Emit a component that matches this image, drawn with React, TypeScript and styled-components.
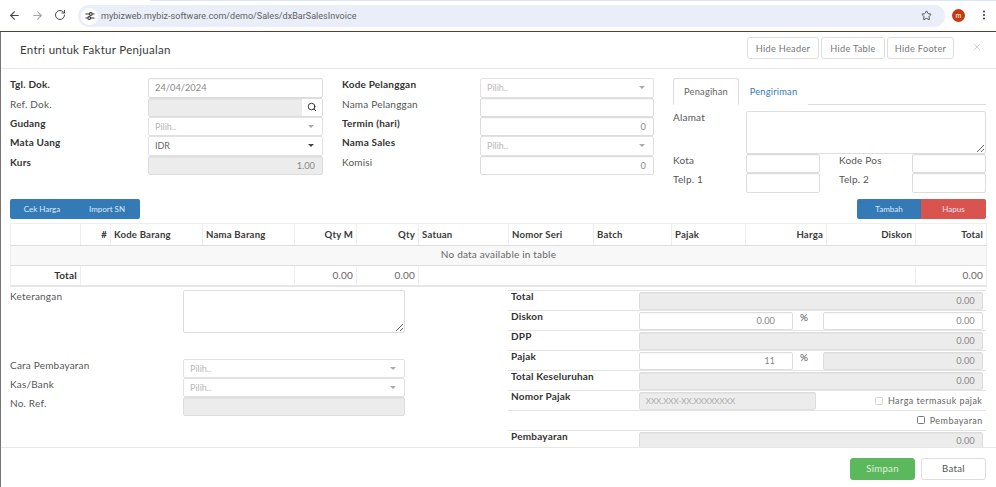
import React from "react";
import styled, { createGlobalStyle } from "styled-components";
import { ArrowLeft, ArrowRight, RotateCw, Star, Search, X, EllipsisVertical } from "lucide-react";

const Global = createGlobalStyle`
  html, body { margin: 0; padding: 0; width: 996px; height: 487px; overflow: hidden; background: #fff; }
  * { box-sizing: border-box; }
  body { font-family: "Lato", "Noto Sans", "Liberation Sans", sans-serif; font-size: 10px; color: #333; }
  input::placeholder { color: #aaa; opacity: 1; font-size: 8px; letter-spacing: 0; }
`;

const Page = styled.div`
  position: relative;
  width: 996px;
  height: 487px;
  overflow: hidden;
  background: #757575;
`;

const BrowserBar = styled.div`
  position: relative;
  height: 31px;
  background: #fff;
  display: flex;
  align-items: center;
  color: #474747;
`;
const TabEdge = styled.div`
  position: absolute;
  left: 150px;
  right: 0;
  top: 0;
  height: 1px;
  background: #d9e6fb;
`;
const NavIcon = styled.span<{ $x: number; $muted?: boolean }>`
  position: absolute;
  left: ${(p) => p.$x}px;
  top: 9px;
  width: 13px;
  height: 13px;
  display: flex;
  color: ${(p) => (p.$muted ? "#a8a8a8" : "#474747")};
`;
const UrlPill = styled.div`
  position: absolute;
  left: 78px;
  top: 5px;
  width: 867px;
  height: 22px;
  border-radius: 11px;
  background: #e9eef9;
  display: flex;
  align-items: center;
`;
const SiteBadge = styled.span`
  width: 17px;
  height: 17px;
  margin-left: 3px;
  border-radius: 50%;
  background: #fff;
  display: flex;
  align-items: center;
  justify-content: center;
`;
const UrlText = styled.span`
  margin-left: 3px;
  font-family: "Roboto", "Liberation Sans", sans-serif;
  font-size: 9px;
  color: #5e5e5e;
  letter-spacing: 0.03px;
`;
const UrlStar = styled.span`
  position: absolute;
  right: 13px;
  top: 5px;
  display: flex;
  color: #474747;
`;
const Avatar = styled.span`
  position: absolute;
  left: 952px;
  top: 9px;
  width: 13px;
  height: 13px;
  border-radius: 50%;
  background: #c4390f;
  color: #fff;
  font-size: 7px;
  line-height: 12px;
  text-align: center;
`;

const Modal = styled.div`
  position: absolute;
  left: 1px;
  top: 32px;
  width: 995px;
  height: 455px;
  background: #fff;
  display: flex;
  flex-direction: column;
`;
const BackdropLine = styled.div`
  position: absolute;
  left: 0;
  top: 31px;
  width: 996px;
  height: 1px;
  background: #5a4030;
`;
const ModalHeader = styled.header`
  position: relative;
  flex: none;
  height: 37px;
  border-bottom: 1px solid #e8e8e8;
`;
const Title = styled.h4`
  position: absolute;
  left: 19px;
  top: 9.5px;
  margin: 0;
  font-size: 11.5px;
  line-height: 16px;
  font-weight: 400;
  letter-spacing: 0.3px;
  color: #3a3a3a;
`;
const HeaderTools = styled.div`
  position: absolute;
  left: 746px;
  top: 5px;
  display: flex;
  gap: 2px;
`;
const GhostButton = styled.button<{ $w: number }>`
  width: ${(p) => p.$w}px;
  height: 22px;
  padding: 0;
  background: #fff;
  border: 1px solid #ddd;
  border-radius: 3px;
  font: inherit;
  font-size: 9.2px;
  letter-spacing: 0.3px;
  color: #777;
`;
const CloseMark = styled.span`
  position: absolute;
  left: 971px;
  top: 10px;
  display: flex;
  color: #c8c8c8;
`;

const ModalBody = styled.main`
  flex: 1;
  min-height: 0;
  overflow: hidden;
`;
const TopForm = styled.section`
  height: 130px;
  padding-top: 9.3px;
  position: relative;
`;
const FieldColumn = styled.div<{ $x: number; $w: number }>`
  position: absolute;
  left: ${(p) => p.$x - 1}px;
  top: 9.3px;
  width: ${(p) => p.$w}px;
`;
const FieldRow = styled.div<{ $label: number }>`
  display: grid;
  grid-template-columns: ${(p) => p.$label}px 1fr;
  height: 19.33px;
`;
const Label = styled.label<{ $bold?: boolean }>`
  font-size: 10px;
  line-height: 12px;
  font-weight: ${(p) => (p.$bold ? 700 : 400)};
  color: ${(p) => (p.$bold ? "#333" : "#555")};
  letter-spacing: 0.2px;
  white-space: nowrap;
`;
const TotalLabel = styled(Label)`
  margin-top: -2px;
  padding-left: 3px;
`;
const TextInput = styled.input<{ $right?: boolean; $inset?: boolean }>`
  width: 100%;
  height: 100%;
  min-width: 0;
  margin: 0;
  padding: 0 ${(p) => (p.$inset ? 17 : 7)}px 0 6px;
  font: inherit;
  font-size: 9.3px;
  color: #888;
  text-align: ${(p) => (p.$right ? "right" : "left")};
  background: ${(p) => (p.disabled ? "#ececec" : "#fff")};
  border: 1px solid #ddd;
  border-radius: 2px;
  box-shadow: inset 0 1px 0 rgba(0, 0, 0, 0.03);
  outline: none;
  &:disabled { color: #888; -webkit-text-fill-color: currentColor; opacity: 1; }
`;
const SearchGroup = styled.div`
  position: relative;
  height: 100%;
`;
const SearchAddon = styled.span`
  position: absolute;
  right: 1px;
  top: 1px;
  bottom: 1px;
  width: 20px;
  background: #fff;
  display: flex;
  align-items: center;
  justify-content: center;
  color: #333;
`;
const SelectBox = styled.div<{ $filled?: boolean }>`
  height: 100%;
  padding: 0 7px 0 6px;
  display: flex;
  align-items: center;
  justify-content: space-between;
  border: 1px solid #e2e2e2;
  border-radius: 2px;
  background: #fff;
  font-size: 9px;
  color: ${(p) => (p.$filled ? "#666" : "#b8b8b8")};
`;
const Caret = styled.span<{ $dark?: boolean }>`
  width: 0;
  height: 0;
  border-left: 3px solid transparent;
  border-right: 3px solid transparent;
  border-top: 3px solid ${(p) => (p.$dark ? "#444" : "#aaa")};
  margin-right: 1px;
`;
const TabStrip = styled.div`
  height: 26.7px;
  display: flex;
  border-bottom: 1px solid #ddd;
`;
const Tab = styled.div<{ $active?: boolean }>`
  width: ${(p) => (p.$active ? 66 : 69)}px;
  height: 27px;
  padding-top: 7px;
  text-align: center;
  line-height: 12px;
  font-size: 9.3px;
  letter-spacing: 0.2px;
  color: ${(p) => (p.$active ? "#666" : "#337ab7")};
  background: #fff;
  border: 1px solid ${(p) => (p.$active ? "#ddd" : "transparent")};
  border-bottom-color: ${(p) => (p.$active ? "#fff" : "transparent")};
  border-radius: 3px 3px 0 0;
`;
const AddressArea = styled.div`
  display: grid;
  grid-template-columns: 73px 1fr;
  height: 43px;
  margin-top: 6px;
`;
const TallInput = styled.textarea`
  display: block;
  width: 100%;
  height: 100%;
  margin: 0;
  padding: 4px 7px;
  font: inherit;
  resize: vertical;
  border: 1px solid #ddd;
  border-radius: 2px;
  outline: none;
  background: #fff;
`;
const PairRow = styled.div`
  display: grid;
  grid-template-columns: 73px 74px 19px 73px 74px;
  height: 19.33px;
`;

const ActionBar = styled.div`
  display: flex;
  justify-content: space-between;
  margin: 0 10px 0 9px;
  height: 20px;
`;
const ButtonGroup = styled.div`
  display: flex;
  height: 20px;
  border-radius: 2px;
  overflow: hidden;
`;
const ActionButton = styled.button<{ $w: number; $danger?: boolean }>`
  width: ${(p) => p.$w}px;
  height: 20px;
  padding: 0;
  border: 0;
  font: inherit;
  font-size: 8px;
  color: #dfeaf5;
  background: ${(p) => (p.$danger ? "#d9534f" : "#337ab7")};
`;

const GridTable = styled.table`
  width: 976px;
  margin: 4px 0 0 9px;
  border-collapse: collapse;
  table-layout: fixed;
  font-size: 10px;
  border: 1px solid #eee;
`;
const HeadCell = styled.th<{ $right?: boolean }>`
  height: 22px;
  padding: 0 3px;
  font-size: 9.6px;
  font-weight: 700;
  text-align: ${(p) => (p.$right ? "right" : "left")};
  color: #3a3a3a;
  letter-spacing: 0.2px;
  border-right: 1px solid #eee;
  border-bottom: 1px solid #ddd;
  white-space: nowrap;
`;
const EmptyCell = styled.td`
  height: 20px;
  padding: 0 0 3px;
  text-align: center;
  background: #f8f8f8;
  color: #666;
  letter-spacing: 0.2px;
  border-bottom: 1px solid #ddd;
`;
const FootCell = styled.td<{ $strong?: boolean }>`
  height: 20px;
  padding: 0 3px;
  text-align: right;
  font-weight: ${(p) => (p.$strong ? 700 : 400)};
  color: ${(p) => (p.$strong ? "#333" : "#666")};
  letter-spacing: 0.2px;
  border-right: 1px solid #eee;
  border-bottom: 2px solid #e6e6e6;
`;
const WidthCol = styled.col<{ $w: number }>`
  width: ${(p) => p.$w}px;
`;

const BottomForm = styled.section`
  position: relative;
  height: 170px;
`;
const NotesColumn = styled.div`
  position: absolute;
  left: 9px;
  top: 3px;
  width: 395px;
`;
const NotesRow = styled.div`
  display: grid;
  grid-template-columns: 173px 222px;
  height: 43px;
  margin-bottom: 26px;
`;
const TotalsColumn = styled.div`
  position: absolute;
  left: 507px;
  top: 3px;
  width: 478px;
`;
const TotalRow = styled.div<{ $cols?: string }>`
  display: grid;
  grid-template-columns: ${(p) => p.$cols ?? "130.7px 344px"};
  height: 20px;
  padding-top: 1.5px;
  border-top: 1px solid #e4e4e4;
`;
const PercentCell = styled.div`
  padding: 0 0 0 7px;
  font-size: 10px;
  line-height: 11px;
  color: #555;
  background: #fff;
`;
const CheckWrap = styled.div`
  display: flex;
  align-items: center;
  justify-content: flex-end;
  gap: 5px;
  height: 100%;
  padding-right: 3.3px;
  font-size: 9px;
  letter-spacing: 0.45px;
  color: #666;
`;
const CheckMark = styled.span<{ $soft?: boolean }>`
  width: 8px;
  height: 8px;
  border: 1px solid ${(p) => (p.$soft ? "#d4d4d4" : "#777")};
  border-radius: 1.5px;
  background: #fff;
`;
const WideCheckRow = styled.div`
  height: 20px;
  border-top: 1px solid #e4e4e4;
`;

const ModalFooter = styled.footer`
  flex: none;
  height: 40px;
  border-top: 1px solid #e8e8e8;
  display: flex;
  justify-content: flex-end;
  align-items: flex-start;
  gap: 6px;
  padding: 9.5px 10px 0 0;
`;
const FooterButton = styled.button<{ $primary?: boolean }>`
  width: 65px;
  height: 22px;
  padding: 0;
  font: inherit;
  font-size: 9.6px;
  letter-spacing: 0.3px;
  border-radius: 3px;
  color: ${(p) => (p.$primary ? "#dff0df" : "#555")};
  background: ${(p) => (p.$primary ? "#5cb85c" : "#fff")};
  border: 1px solid ${(p) => (p.$primary ? "#5cb85c" : "#ddd")};
`;

const Select = ({ value }: { value?: string }) => (
  <SelectBox $filled={!!value}>
    {value ?? "Pilih.."}
    <Caret $dark={!!value} />
  </SelectBox>
);

const cols = [70, 30, 92, 92, 62, 62, 90, 85, 78, 74, 81, 89, 71];

export default function App() {
  return (
    <Page>
      <Global />
      <BrowserBar>
        <TabEdge />
        <NavIcon $x={8}><ArrowLeft size={13} strokeWidth={2} /></NavIcon>
        <NavIcon $x={31} $muted><ArrowRight size={13} strokeWidth={2} /></NavIcon>
        <NavIcon $x={54}><RotateCw size={12} strokeWidth={2} /></NavIcon>
        <UrlPill>
          <SiteBadge>
            <svg width="10" height="10" viewBox="0 0 10 10" fill="none" stroke="#333" strokeWidth="1.1">
              <path d="M0.5 3H4M7.5 3H9.5M0.5 7H2.5M6 7H9.5" />
              <circle cx="5.8" cy="3" r="1.4" />
              <circle cx="4.2" cy="7" r="1.4" />
            </svg>
          </SiteBadge>
          <UrlText>mybizweb.mybiz-software.com/demo/Sales/dxBarSalesInvoice</UrlText>
          <UrlStar><Star size={11} strokeWidth={2} /></UrlStar>
        </UrlPill>
        <Avatar>m</Avatar>
        <NavIcon $x={978}><EllipsisVertical size={12} strokeWidth={2.4} /></NavIcon>
      </BrowserBar>
      <BackdropLine />
      <Modal>
        <ModalHeader>
          <Title>Entri untuk Faktur Penjualan</Title>
          <HeaderTools>
            <GhostButton $w={72}>Hide Header</GhostButton>
            <GhostButton $w={64}>Hide Table</GhostButton>
            <GhostButton $w={67}>Hide Footer</GhostButton>
          </HeaderTools>
          <CloseMark><X size={10} strokeWidth={2} /></CloseMark>
        </ModalHeader>
        <ModalBody>
          <TopForm>
            <FieldColumn $x={10} $w={313}>
              <FieldRow $label={138}><Label $bold>Tgl. Dok.</Label><TextInput readOnly value="24/04/2024" /></FieldRow>
              <FieldRow $label={138}>
                <Label>Ref. Dok.</Label>
                <SearchGroup>
                  <TextInput disabled />
                  <SearchAddon><Search size={10} strokeWidth={2.4} /></SearchAddon>
                </SearchGroup>
              </FieldRow>
              <FieldRow $label={138}><Label $bold>Gudang</Label><Select /></FieldRow>
              <FieldRow $label={138}><Label $bold>Mata Uang</Label><Select value="IDR" /></FieldRow>
              <FieldRow $label={138}><Label $bold>Kurs</Label><TextInput disabled $right value="1.00" /></FieldRow>
            </FieldColumn>
            <FieldColumn $x={342} $w={312}>
              <FieldRow $label={138}><Label $bold>Kode Pelanggan</Label><Select /></FieldRow>
              <FieldRow $label={138}><Label>Nama Pelanggan</Label><TextInput readOnly /></FieldRow>
              <FieldRow $label={138}><Label $bold>Termin (hari)</Label><TextInput readOnly $right value="0" /></FieldRow>
              <FieldRow $label={138}><Label $bold>Nama Sales</Label><Select /></FieldRow>
              <FieldRow $label={138}><Label>Komisi</Label><TextInput readOnly $right value="0" /></FieldRow>
            </FieldColumn>
            <FieldColumn $x={673} $w={313}>
              <TabStrip>
                <Tab $active>Penagihan</Tab>
                <Tab>Pengiriman</Tab>
              </TabStrip>
              <AddressArea>
                <Label>Alamat</Label>
                <TallInput />
              </AddressArea>
              <PairRow>
                <Label>Kota</Label><TextInput readOnly />
                <span />
                <Label>Kode Pos</Label><TextInput readOnly />
              </PairRow>
              <PairRow>
                <Label>Telp. 1</Label><TextInput readOnly />
                <span />
                <Label>Telp. 2</Label><TextInput readOnly />
              </PairRow>
            </FieldColumn>
          </TopForm>
          <ActionBar>
            <ButtonGroup>
              <ActionButton $w={64}>Cek Harga</ActionButton>
              <ActionButton $w={66}>Import SN</ActionButton>
            </ButtonGroup>
            <ButtonGroup>
              <ActionButton $w={64}>Tambah</ActionButton>
              <ActionButton $w={65} $danger>Hapus</ActionButton>
            </ButtonGroup>
          </ActionBar>
          <GridTable>
            <colgroup>
              {cols.map((w, i) => <WidthCol key={i} $w={w} />)}
            </colgroup>
            <thead>
              <tr>
                <HeadCell />
                <HeadCell $right>#</HeadCell>
                <HeadCell>Kode Barang</HeadCell>
                <HeadCell>Nama Barang</HeadCell>
                <HeadCell $right>Qty M</HeadCell>
                <HeadCell $right>Qty</HeadCell>
                <HeadCell>Satuan</HeadCell>
                <HeadCell>Nomor Seri</HeadCell>
                <HeadCell>Batch</HeadCell>
                <HeadCell>Pajak</HeadCell>
                <HeadCell $right>Harga</HeadCell>
                <HeadCell $right>Diskon</HeadCell>
                <HeadCell $right>Total</HeadCell>
              </tr>
            </thead>
            <tbody>
              <tr><EmptyCell colSpan={13}>No data available in table</EmptyCell></tr>
            </tbody>
            <tfoot>
              <tr>
                <FootCell $strong>Total</FootCell>
                <FootCell colSpan={3} />
                <FootCell>0.00</FootCell>
                <FootCell>0.00</FootCell>
                <FootCell colSpan={6} />
                <FootCell>0.00</FootCell>
              </tr>
            </tfoot>
          </GridTable>
          <BottomForm>
            <NotesColumn>
              <NotesRow>
                <Label>Keterangan</Label>
                <TallInput />
              </NotesRow>
              <FieldRow $label={173}><Label>Cara Pembayaran</Label><Select /></FieldRow>
              <FieldRow $label={173}><Label>Kas/Bank</Label><Select /></FieldRow>
              <FieldRow $label={173}><Label>No. Ref.</Label><TextInput disabled /></FieldRow>
            </NotesColumn>
            <TotalsColumn>
              <TotalRow><TotalLabel $bold>Total</TotalLabel><TextInput disabled $right value="0.00" /></TotalRow>
              <TotalRow $cols="130.7px 154.3px 29.7px 160px">
                <TotalLabel $bold>Diskon</TotalLabel>
                <TextInput readOnly $right $inset value="0.00" />
                <PercentCell>%</PercentCell>
                <TextInput readOnly $right value="0.00" />
              </TotalRow>
              <TotalRow><TotalLabel $bold>DPP</TotalLabel><TextInput disabled $right value="0.00" /></TotalRow>
              <TotalRow $cols="130.7px 154.3px 29.7px 160px">
                <TotalLabel $bold>Pajak</TotalLabel>
                <TextInput readOnly $right $inset value="11" />
                <PercentCell>%</PercentCell>
                <TextInput disabled $right value="0.00" />
              </TotalRow>
              <TotalRow><TotalLabel $bold>Total Keseluruhan</TotalLabel><TextInput disabled $right value="0.00" /></TotalRow>
              <TotalRow $cols="130.7px 177px 170px">
                <TotalLabel $bold>Nomor Pajak</TotalLabel>
                <TextInput disabled placeholder="XXX.XXX-XX.XXXXXXXX" />
                <CheckWrap><CheckMark $soft />Harga termasuk pajak</CheckWrap>
              </TotalRow>
              <WideCheckRow>
                <CheckWrap><CheckMark />Pembayaran</CheckWrap>
              </WideCheckRow>
              <TotalRow><TotalLabel $bold>Pembayaran</TotalLabel><TextInput disabled $right value="0.00" /></TotalRow>
            </TotalsColumn>
          </BottomForm>
        </ModalBody>
        <ModalFooter>
          <FooterButton $primary>Simpan</FooterButton>
          <FooterButton>Batal</FooterButton>
        </ModalFooter>
      </Modal>
    </Page>
  );
}
